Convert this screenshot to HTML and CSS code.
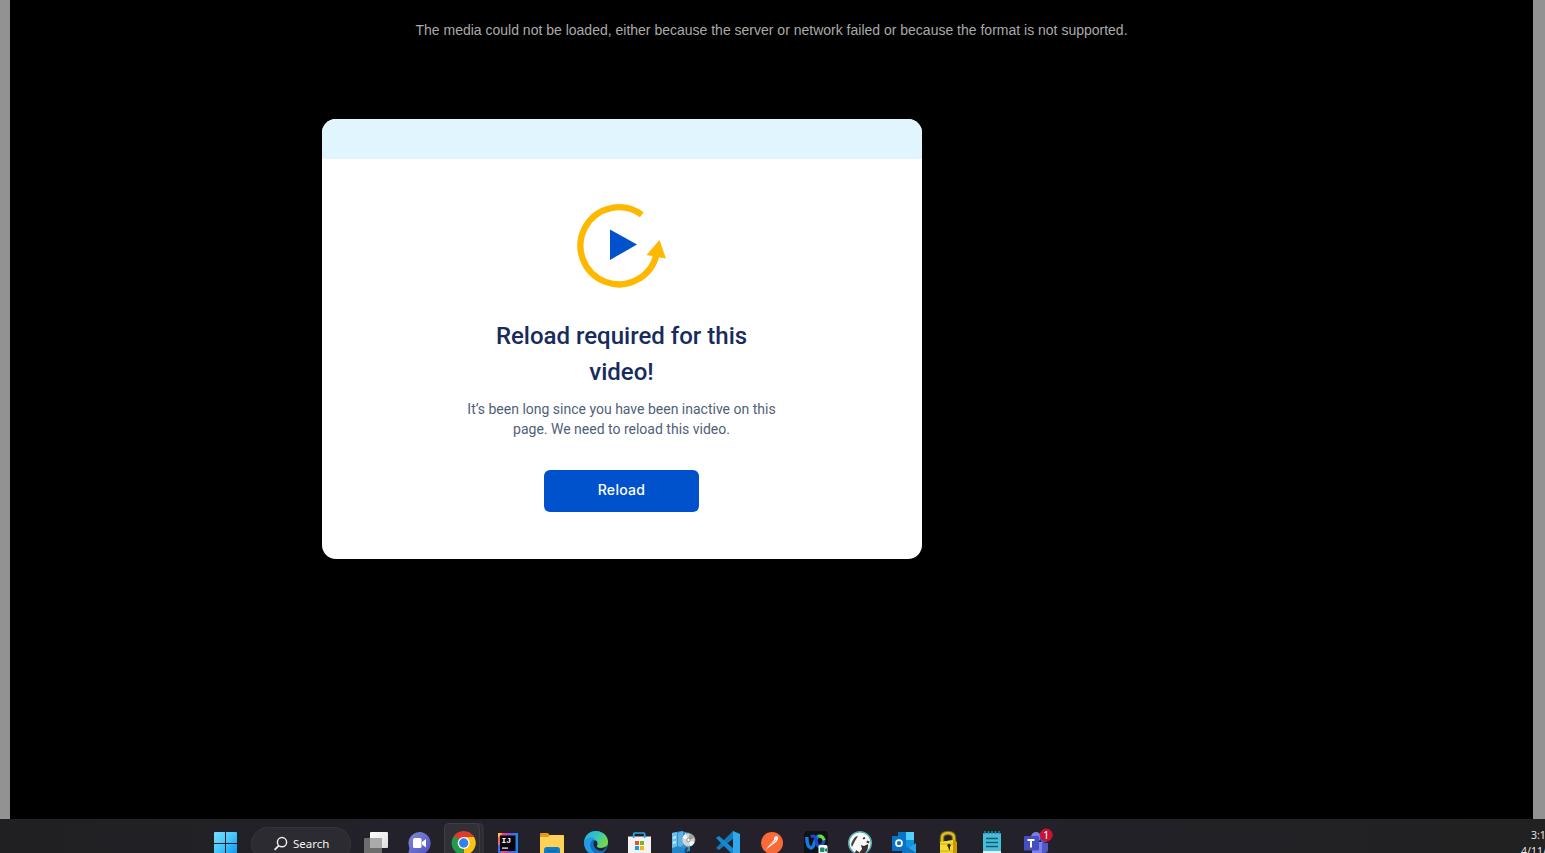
FILE: index.html
```html
<!DOCTYPE html>
<html lang="en">
<head>
<meta charset="utf-8">
<title>Video player</title>
<link rel="stylesheet" href="styles.css">
</head>
<body>
<main class="player">
  <p class="media-error"><span>The media could not be loaded, either because the server or network failed or because the format is not supported.</span></p>
  <section class="card">
    <div class="card-head"></div>
    <div class="card-body">
      <svg class="reload-art" viewBox="0 0 120 110" width="120" height="110">
        <path d="M81.800 24.800 A38.500 38.500 0 1 0 96.600 64" fill="none" stroke="#ffb800" stroke-width="6.3"/>
        <path d="M99.5 50 L106 68.5 L86.5 65Z" fill="#ffb800"/>
        <path d="M50 39.5 L77 54.5 L50 70Z" fill="#0052cc"/>
      </svg>
      <h1 class="title"><span>Reload required for this</span><br><span>video!</span></h1>
      <p class="message">It’s been long since you have been inactive on this<br>page. We need to reload this video.</p>
      <button class="reload">Reload</button>
    </div>
  </section>
</main>
<footer class="taskbar">
  <div class="apps">
    <svg class="app" viewBox="0 0 44 34">
      <defs><linearGradient id="win" gradientUnits="userSpaceOnUse" x1="10" y1="13" x2="33" y2="36"><stop stop-color="#7ddcff"/><stop offset=".5" stop-color="#43c7fa"/><stop offset="1" stop-color="#0a90f0"/></linearGradient></defs>
      <path d="M10 14q0-1 1-1h10v11H10zM22 13h10q1 0 1 1v10H22zM10 25h11v11H10zM22 25h11v11H22z" fill="url(#win)"/>
    </svg>
    <div class="search">
      <svg width="16" height="16" viewBox="0 0 16 16"><circle cx="9" cy="6.2" r="4.6" fill="none" stroke="#eee" stroke-width="1.5"/><path d="M5.8 9.6 1.6 13.8" stroke="#eee" stroke-width="1.8"/></svg>
      <span>Search</span>
    </div>
    <svg class="app" viewBox="0 0 44 34">
      <defs><linearGradient id="tv" x2="1" y2="1"><stop stop-color="#fff"/><stop offset="1" stop-color="#ddd"/></linearGradient></defs>
      <rect x="16" y="13" width="18" height="16" rx="1" fill="url(#tv)"/><rect x="10" y="19" width="18" height="17" rx="1" fill="#777" fill-opacity=".88"/><path d="M16 19h12v10H16z" fill="#aaa"/>
    </svg>
    <svg class="app" viewBox="0 0 44 34">
      <defs><linearGradient id="chat" x2="1" y2="1"><stop stop-color="#8589d5"/><stop offset="1" stop-color="#4d50c3"/></linearGradient></defs>
      <path d="M21.5 13a11.3 11.3 0 1 1-5 21.5L10 36l1.5-7A11.3 11.3 0 0 1 21.5 13z" fill="url(#chat)"/><rect x="15" y="19" width="8.5" height="10" rx="1.5" fill="#fff"/><path d="m24 23 4-3v8.5l-4-3z" fill="#fff"/>
    </svg>
    <svg class="app" viewBox="0 0 44 34">
      <path d="M6 4h31q4 0 4 4v28H6z" fill="#2e2b33"/><path d="M36.5 4.5Q41 4.5 41 9v27" fill="none" stroke="#3d3a42"/>
      <rect x="2.5" y="4.500" width="35" height="36" rx="4" fill="#323037" stroke="#403e45"/>
      <path d="M21.700 24 L11.300 18 A12 12 0 0 1 32.100 18Z" fill="#df3b2d"/>
      <path d="M21.700 24 L32.100 18 A12 12 0 0 1 21.700 36Z" fill="#fbc412"/>
      <path d="M21.700 24 L21.700 36 A12 12 0 0 1 11.300 18Z" fill="#259b49"/>
      <path d="M21.700 18h10.400v6h-10z" fill="#fbc412"/><path d="M11.300 18 17 28l4-4-1-6z" fill="#259b49"/><path d="M13 16h18l1.100 2H21.700L17 21z" fill="#df3b2d"/>
      <circle cx="21.700" cy="24" r="6" fill="#fff"/><circle cx="21.700" cy="24" r="4.700" fill="#367fed"/>
    </svg>
    <svg class="app" viewBox="0 0 44 34">
      <defs><linearGradient id="ij" x2="1"><stop stop-color="#fb6a56"/><stop offset=".3" stop-color="#ee3d98"/><stop offset=".6" stop-color="#7b53d5"/><stop offset="1" stop-color="#168bee"/></linearGradient></defs>
      <path d="M12 14h20v22H12z" fill="url(#ij)"/><path d="M12 14h4l-4 5z" fill="#fcc24a"/><path d="M12 26h3v8h-3z" fill="#3874ec"/><path d="M14 16.500h15.500V32H14z" fill="#08050d"/><path d="M16 28.500h6v1.200h-6z" fill="#fff"/>
      <text x="15.500" y="24" class="ij-text">IJ</text>
    </svg>
    <svg class="app" viewBox="0 0 44 34">
      <path d="M10 15q0-1 1-1h7l2 2.500h13q1 0 1 1V36H10z" fill="#e39c11"/><path d="M10 18h8l2-2h13q1 0 1 1v19H10z" fill="#ffd257"/><path d="M14 36v-5q0-3 3-3h10q3 0 3 3v5z" fill="#117cc8"/><path d="M17 31.500h10v1H17z" fill="#075c9b"/>
    </svg>
    <svg class="app" viewBox="0 0 44 34">
      <defs><linearGradient id="edgeTop" x2="1" y2=".5"><stop stop-color="#2aafe4"/><stop offset=".5" stop-color="#2cc4c7"/><stop offset="1" stop-color="#74d946"/></linearGradient></defs>
      <circle cx="22" cy="24" r="12" fill="#126fc6"/>
      <path d="M10 23C11 15 17 12 22 12c7 0 12 5 12 11 0 4-3 6-7 6-3 0-4.500-1-4-2 1-1 1.500-5-2-6-4-2-9-1-11 2z" fill="url(#edgeTop)"/>
      <path d="M10 23c2-5 8-6 11-3-5 1-6 7-3 11l4 5C14 36 10 30 10 23z" fill="#249bdf"/><path d="M20 22c2-1 4 1 3 4-1 2 1 3 3 3 3 0 5-1 7-2-1 2-3 4-5 5-5 0-10-4-8-10z" fill="#24242b"/>
    </svg>
    <svg class="app" viewBox="0 0 44 34">
      <path d="M10 17.500h23v17q0 2-2 2H12q-2 0-2-2z" fill="#f3f3f3"/><path d="M15.700 19v-4q0-1 1-1h9q1 0 1 1v4" fill="none" stroke="#29a9e9" stroke-width="1.700"/>
      <path d="M17 22h4v4h-4z" fill="#ee5227"/><path d="M22 22h4v4h-4z" fill="#76b531"/><path d="M17 27h4v4h-4z" fill="#11a0df"/><path d="M22 27h4v4h-4z" fill="#fbb409"/>
    </svg>
    <svg class="app" viewBox="0 0 44 34">
      <path d="m10 14 9-2 9 2v18l-4 1v3l-14-3z" fill="#2f91ce"/><path d="m10 14 5-1v19l-5 1z" fill="#6fbfe9"/><path d="m16 14 5-2v14l-5 4z" fill="#5bb4e5"/><path d="m11 18 3-1v2l-3 1m0 3 3-1v2l-3 1M23 14l4 1v3l-4-1z" fill="#c8eeff"/><path d="m10 29 6-2 8 3v6H10z" fill="#2385c8"/>
      <circle cx="26.500" cy="21" r="6.500" fill="#d3d9da" stroke="#8d9ba3" stroke-width=".6"/><path d="M26.500 21 20.500 19q1-3 3-4zM26.500 21l6 2q-1 3-4 4z" fill="#f8f9f9"/><path d="m26.500 21 1-6q4 1 5 4z" fill="#a99f91"/><circle cx="26.500" cy="21" r="1.800" fill="#fff" stroke="#809098"/><path d="m22 33 2-5 2 1-2 5z" fill="#124b83"/>
    </svg>
    <svg class="app" viewBox="0 0 44 34">
      <path d="m10 29 3 2 15-12v-6l-1-1z" fill="#127bbd"/><path d="m10 19 3-2 15 13v6h-1z" fill="#1688d1"/><path d="m27 12 7 3v19l-7 3z" fill="#31a7ed"/>
    </svg>
    <svg class="app" viewBox="0 0 44 34">
      <circle cx="22" cy="24" r="11" fill="#f96a38"/><path d="m17 29 7-8 1-2 2-1 1 2-2 3-8 6-2 2z" fill="#fff"/><path d="M24 20q0-3 3-3 2 1 1 3l-2 3z" fill="#fff1e9"/><path d="m21 25 5-4" stroke="#f58b65" stroke-width=".7"/>
    </svg>
    <svg class="app" viewBox="0 0 44 34">
      <rect x="10" y="12" width="24" height="24" rx="4" fill="#101115"/>
      <path d="M12.800 18q0 10 4.200 11c4 0 3-11 8-12" fill="none" stroke="#117ee3" stroke-width="3.500"/><path d="M17 18q4-3 5 3 1 7 4 6 4-2 4-7" fill="none" stroke="#2348c5" stroke-width="3.200"/><path d="M24.500 17.300q4-1 5.700 4" fill="none" stroke="#62dc47" stroke-width="3"/>
      <rect x="24.500" y="26" width="9" height="9" rx="1.500" fill="#f3fbf8"/><rect x="26" y="28.500" width="4.500" height="4.500" rx="1" fill="#168e67"/><path d="m31 30 2-1v4l-2-1z" fill="#168e67"/>
    </svg>
    <svg class="app" viewBox="0 0 44 34">
      <circle cx="22" cy="24" r="11.300" fill="#fafafa" stroke="#4caab1" stroke-width="1.500"/>
      <path d="M15 21q2-4 5-4l-3 5-3 6q-2-3 1-7z" fill="#4b3d38"/><path d="M24.500 19l2-1 1 1.500-2 1zM29 21.500l2.500 1-.5 2-2.500-1zM23 26l3 1 4-2q1 5-3 9h-6l3-4zM18 31l3 2v3l-4-2z" fill="#3d302c"/>
    </svg>
    <svg class="app" viewBox="0 0 44 34">
      <path d="M16 13h16v18H16z" fill="#1490df"/><path d="M24 13h8v8h-8z" fill="#50d1fa"/><path d="M16 13h8v7h-8z" fill="#0875c3"/><path d="m20 24 7 5 7-5v12H20z" fill="#26a4ea"/><path d="m20 24 14 10v2H20z" fill="#1274bd"/>
      <rect x="10" y="17" width="14" height="15" rx="1" fill="#0872c7"/><circle cx="17" cy="24.200" r="3" fill="none" stroke="#fff" stroke-width="1.700"/>
    </svg>
    <svg class="app" viewBox="0 0 44 34">
      <path d="M16 24v-5q0-5 6-5t6 5v5" fill="none" stroke="#746311" stroke-width="4.500"/><path d="M16 24v-5q0-5 6-5t6 5v5" fill="none" stroke="#d9bd25" stroke-width="2.500"/>
      <path d="m14 23 14-2 3 2v11l-17 2z" fill="#c99a08"/><path d="m14 23 13-2v13l-13 2z" fill="#f5dc35"/><path d="M14 25h13M14 32h13" stroke="#c59407" stroke-width=".7"/><circle cx="23" cy="26.500" r="1.700" fill="#352b07"/><path d="m22 27 2-1v5h-1z" fill="#352b07"/>
    </svg>
    <svg class="app" viewBox="0 0 44 34">
      <rect x="13" y="14" width="18" height="19" rx="1" fill="#48bdd9"/><path d="M13 32h18v3H13z" fill="#e9eeee"/><path d="M15 12v3m3.500-3v3m3.500-3v3m3.500-3v3m3.500-3v3" stroke="#168ca9" stroke-width="1.500"/><path d="M16 19.500h12M16 23.500h12M16 27.500h12" stroke="#095d79" stroke-width="1.500"/>
    </svg>
    <svg class="app" viewBox="0 0 44 34">
      <circle cx="22" cy="18" r="5" fill="#7480e5"/><circle cx="30" cy="20" r="3.500" fill="#5059c9"/><path d="M18 23h11v11H18z" fill="#7b83eb"/><path d="M28 24h6v8q-2 3-6 2z" fill="#5059c9"/>
      <rect x="10" y="17" width="15" height="14.500" rx="1" fill="#464fc0"/><path d="M13.500 21h7M17 21v7.500" stroke="#fff" stroke-width="2"/>
      <circle cx="32.200" cy="16" r="6.500" fill="#ca1237"/><text x="32.200" y="20" class="badge-text">1</text>
    </svg>
  </div>
  <div class="clock"><span class="time">3:1</span><span>4/11/</span></div>
</footer>
</body>
</html>
```
FILE: styles.css
```css
* { box-sizing: border-box; }
body {
  margin: 0;
  width: 1545px;
  height: 853px;
  overflow: hidden;
  display: flex;
  flex-direction: column;
  background: #000;
}
.player {
  height: 819px;
  border-left: 10px solid #929292;
  border-right: 12px solid #929292;
  background: #000;
}
.media-error {
  margin: 0;
  height: 119px;
  padding-top: 20px;
  color: #aaa;
  font: 14px/20px "Liberation Sans", Arial, sans-serif;
  text-align: center;
}
.card {
  width: 600px;
  height: 440px;
  margin-left: 312px;
  border-radius: 14px;
  overflow: hidden;
  background: #fff;
}
.card-head { height: 40px; background: #e1f5fe; }
.card-body {
  display: flex;
  flex-direction: column;
  align-items: center;
  padding: 31px 1px 0 0;
}
.reload-art { display: block; margin-left: -3px; }
.title {
  margin: 18px 0 0;
  color: #172b5c;
  font: 500 24px/36px Roboto, sans-serif;
  text-align: center;
}
.message {
  margin: 9px 0 0;
  color: #505f79;
  font: 14px/20px Roboto, sans-serif;
  text-align: center;
}
.reload {
  width: 155px;
  height: 42px;
  margin-top: 31px;
  padding: 0 0 2px;
  border: 0;
  border-radius: 6px;
  background: #0052cc;
  color: #fff;
  font: 500 14px/20px Inter, sans-serif;
  letter-spacing: 0.3px;
}
.taskbar {
  height: 34px;
  padding-left: 204px;
  display: flex;
  justify-content: space-between;
  overflow: hidden;
  background: linear-gradient(90deg, #202022 0, #232129 25%, #24212c 55%, #222126 78%, #212121 100%);
}
.apps { display: flex; }
.app { display: block; width: 44px; height: 34px; flex: none; }
.search {
  width: 100px;
  height: 34px;
  margin: 8px 3px 0;
  padding: 8px 0 0 21px;
  display: flex;
  gap: 4px;
  border: 1px solid #37353c;
  border-radius: 17px;
  background: #2d2b32;
  color: #f1f1f1;
  font: 11.5px/16px "Noto Sans", sans-serif;
}
.search svg { flex: none; }
.ij-text { fill: #fff; font: bold 8px "Liberation Mono", monospace; }
.badge-text { fill: #fff; font: 11px "Noto Sans", sans-serif; text-anchor: middle; }
.clock {
  width: 24px;
  display: flex;
  flex-direction: column;
  padding-top: 8px;
  color: #e6e6e6;
  font: 10.5px/16px "Noto Sans", sans-serif;
  white-space: nowrap;
}
.time { padding-left: 10px; }
```
